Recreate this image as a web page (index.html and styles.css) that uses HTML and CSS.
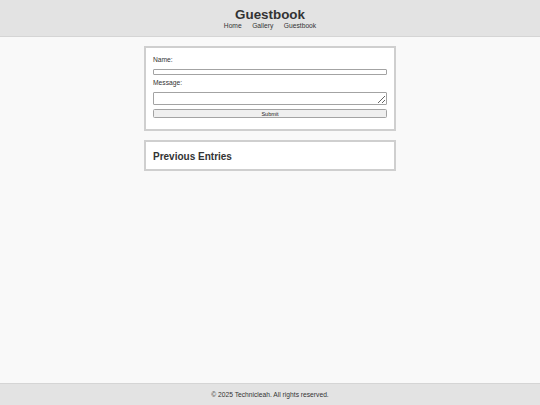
FILE: index.html
```html
<!DOCTYPE html>
<html lang="en">
<head>
<meta charset="utf-8">
<title>Guestbook</title>
<link rel="stylesheet" href="styles.css">
</head>
<body>
<header class="site-header">
  <h1 class="site-title">Guestbook</h1>
  <nav class="site-nav">
    <a href="#">Home</a>
    <a href="#">Gallery</a>
    <a href="#">Guestbook</a>
  </nav>
</header>
<main class="content">
  <section class="card">
    <form class="gb-form">
      <label class="field-label" for="name">Name:</label>
      <input class="field-input" id="name" type="text">
      <label class="field-label" for="message">Message:</label>
      <textarea class="field-area" id="message"></textarea>
      <button class="submit-btn" type="button">Submit</button>
    </form>
  </section>
  <section class="card card-entries">
    <h2 class="entries-title">Previous Entries</h2>
  </section>
</main>
<footer class="site-footer">© 2025 Technicleah. All rights reserved.</footer>
</body>
</html>
```
FILE: styles.css
```css
* { box-sizing: border-box; }
html, body { margin: 0; padding: 0; }
body {
  min-height: 100vh;
  display: flex;
  flex-direction: column;
  background: #f9f9f9;
  color: #333;
  font-family: "Liberation Sans", Arial, sans-serif;
  font-size: 6.7px;
}
.site-header {
  background: #e3e3e3;
  border-bottom: 1px solid #d5d5d5;
  padding: 7px 0 6px;
  text-align: center;
}
.site-title {
  margin: 0;
  font-size: 13.4px;
  line-height: 15px;
  font-weight: bold;
  color: #333;
}
.site-nav {
  display: flex;
  justify-content: center;
  gap: 10.5px;
  line-height: 8px;
}
.site-nav a {
  color: #333;
  text-decoration: none;
}
.content {
  flex: 1;
  display: flex;
  flex-direction: column;
  align-items: center;
  gap: 9px;
  padding-top: 9px;
}
.card {
  width: 252px;
  background: #fff;
  border: 2px solid #cfcfcf;
  padding: 8px 7px 11.6px;
}
.gb-form {
  display: flex;
  flex-direction: column;
}
.field-label {
  display: block;
  line-height: 8px;
  margin-bottom: 4.7px;
}
.field-input {
  display: block;
  width: 100%;
  height: 6.8px;
  margin: 0 0 4px;
  padding: 0;
  border: 1px solid #a3a3a3;
  border-radius: 1px;
  background: #fff;
  font-size: 5.5px;
}
.field-area {
  display: block;
  width: 100%;
  height: 13.3px;
  margin: 0 0 4px;
  padding: 0;
  border: 1px solid #a3a3a3;
  border-radius: 1px;
  background: #fff;
  font-size: 5.5px;
  resize: vertical;
}
.submit-btn {
  display: block;
  width: 100%;
  height: 8.4px;
  margin: 0;
  padding: 0;
  border: 1px solid #a3a3a3;
  border-radius: 1.5px;
  background: #efefef;
  color: #222;
  font-family: "Liberation Sans", Arial, sans-serif;
  font-size: 5.5px;
  line-height: 6px;
}
.card-entries {
  padding: 8.5px 7px 7.5px;
}
.entries-title {
  margin: 0;
  font-size: 10px;
  line-height: 11px;
  font-weight: bold;
  color: #333;
}
.site-footer {
  background: #e3e3e3;
  border-top: 1px solid #d5d5d5;
  padding: 6.5px 0;
  line-height: 8px;
  text-align: center;
  color: #333;
}
```
